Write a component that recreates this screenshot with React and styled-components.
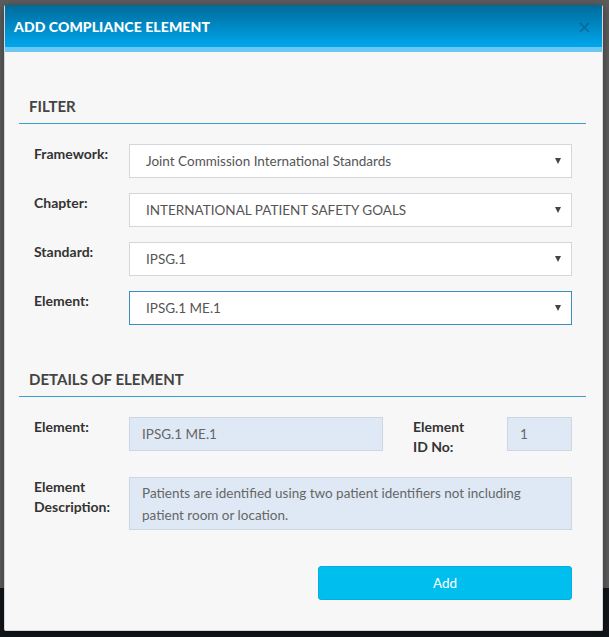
import React from 'react'
import styled, { createGlobalStyle } from 'styled-components'

const Global = createGlobalStyle`
    html, body {
        margin: 0;
        padding: 0;
    }
    body {
        font-family: Lato, "Liberation Sans", sans-serif;
        background: linear-gradient(to bottom, #5c5c5c 0, #5c5c5c 588px, #121519 588px);
        min-height: 637px;
    }
`

const Backdrop = styled.div`
    padding: 5px 6px 7px 4px;
`

const Modal = styled.div`
    width: 597px;
    background: #f7f7f7;
    border: 1px solid #d4d8dc;
    border-top: none;
    border-radius: 2px;
    box-shadow: 0 2px 8px rgba(0, 0, 0, 0.4);
`

const Header = styled.header`
    position: relative;
    height: 42px;
    padding: 0 9px;
    display: flex;
    align-items: center;
    background: linear-gradient(to bottom, #006a9b, #00a7ec);
    border-bottom: 5px solid #6cc8f2;

    & h1 {
        margin: 0;
        font-size: 14px;
        font-weight: 900;
        color: #fff;
        letter-spacing: 0.1px;
    }
`

const CloseBtn = styled.button`
    position: absolute;
    right: 10px;
    top: 13px;
    padding: 0;
    border: none;
    background: none;
    font-family: "DejaVu Sans", sans-serif;
    font-size: 18px;
    line-height: 18px;
    color: rgba(20, 60, 90, 0.45);
    cursor: pointer;
`

const Body = styled.div`
    padding: 44px 16px 30px 14px;
`

const Section = styled.section`
    & + & {
        margin-top: 44px;
    }
`

const SectionTitle = styled.h2`
    margin: 0;
    padding: 0 10px 7px;
    font-size: 15px;
    font-weight: 700;
    line-height: 20px;
    color: #444;
    border-bottom: 1px solid #3a9fd0;
`

const Rows = styled.div`
    padding: 20px 14px 0 15px;
    display: flex;
    flex-direction: column;
    gap: ${(p) => p.gap}px;
`

const Row = styled.div`
    display: flex;
    align-items: flex-start;
`

const Label = styled.label`
    width: ${(p) => p.width || 95}px;
    flex-shrink: 0;
    font-size: 14px;
    font-weight: 700;
    line-height: 20px;
    color: #333;
`

const Select = styled.div`
    flex: 1;
    height: 34px;
    box-sizing: border-box;
    padding: 0 10px 0 16px;
    display: flex;
    align-items: center;
    justify-content: space-between;
    background: #fff;
    border: 1px solid ${(p) => (p.focused ? '#3b8dbd' : '#d3d6db')};
    font-size: 13.5px;
    color: #555;
`

const Caret = styled.span`
    width: 0;
    height: 0;
    border-left: 3.5px solid transparent;
    border-right: 3.5px solid transparent;
    border-top: 6px solid #444;
`

const ReadOnly = styled.div`
    width: ${(p) => (p.width ? `${p.width}px` : 'auto')};
    flex: ${(p) => (p.width ? '0 0 auto' : 1)};
    min-height: 34px;
    box-sizing: border-box;
    padding: ${(p) => (p.multi ? '4px 40px 3px 12px' : '0 12px')};
    display: flex;
    align-items: ${(p) => (p.multi ? 'flex-start' : 'center')};
    background: #dfe9f5;
    border: 1px solid #cdd7e4;
    font-size: 13.5px;
    line-height: ${(p) => (p.multi ? '22px' : 'normal')};
    color: #666;
`

const Gap = styled.div`
    width: 30px;
    flex-shrink: 0;
`

const Footer = styled.div`
    margin-top: 36px;
    padding-right: 14px;
    display: flex;
    justify-content: flex-end;
`

const AddBtn = styled.button`
    width: 254px;
    height: 34px;
    border: 1px solid #00b0e2;
    border-radius: 3px;
    background: #00bfef;
    color: #fff;
    font-family: inherit;
    font-size: 13.5px;
    cursor: pointer;
`

const filters = [
    { label: 'Framework:', value: 'Joint Commission International Standards' },
    { label: 'Chapter:', value: 'INTERNATIONAL PATIENT SAFETY GOALS' },
    { label: 'Standard:', value: 'IPSG.1' },
    { label: 'Element:', value: 'IPSG.1 ME.1', focused: true },
]

const App = () => {
    return (
        <Backdrop>
            <Global />
            <Modal>
                <Header>
                    <h1>ADD COMPLIANCE ELEMENT</h1>
                    <CloseBtn>×</CloseBtn>
                </Header>
                <Body>
                    <Section>
                        <SectionTitle>FILTER</SectionTitle>
                        <Rows gap={15}>
                            {filters.map((f) => (
                                <Row key={f.label}>
                                    <Label>{f.label}</Label>
                                    <Select focused={f.focused}>
                                        <span>{f.value}</span>
                                        <Caret />
                                    </Select>
                                </Row>
                            ))}
                        </Rows>
                    </Section>
                    <Section>
                        <SectionTitle>DETAILS OF ELEMENT</SectionTitle>
                        <Rows gap={20}>
                            <Row>
                                <Label>Element:</Label>
                                <ReadOnly>IPSG.1 ME.1</ReadOnly>
                                <Gap />
                                <Label width={94}>
                                    Element
                                    <br />
                                    ID No:
                                </Label>
                                <ReadOnly width={65}>1</ReadOnly>
                            </Row>
                            <Row>
                                <Label>
                                    Element
                                    <br />
                                    Description:
                                </Label>
                                <ReadOnly multi>
                                    Patients are identified using two patient identifiers not including
                                    patient room or location.
                                </ReadOnly>
                            </Row>
                        </Rows>
                    </Section>
                    <Footer>
                        <AddBtn>Add</AddBtn>
                    </Footer>
                </Body>
            </Modal>
        </Backdrop>
    )
}

export default App
